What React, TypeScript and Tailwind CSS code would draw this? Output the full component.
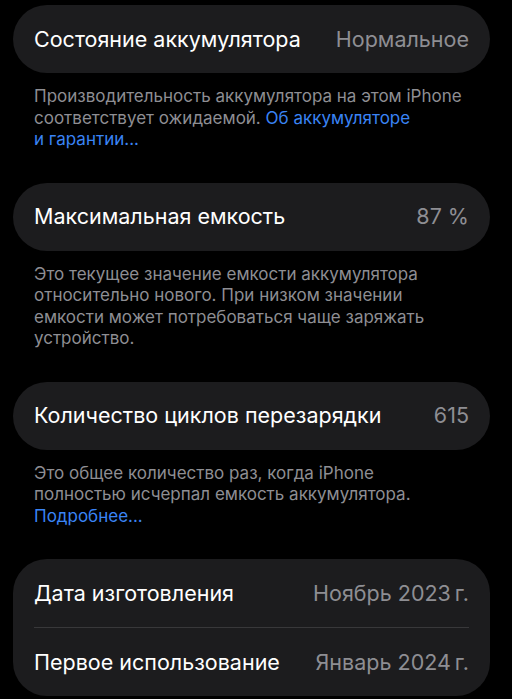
import React from "react";

const font = { fontFamily: "Inter, 'Noto Sans', sans-serif" };

function Row({ label, value }: { label: string; value: string }) {
  return (
    <div className="flex h-[68px] items-center justify-between px-[21px]">
      <span className="text-[21.5px] text-white">{label}</span>
      <span className="text-[21.5px] text-[#8e8e93]">{value}</span>
    </div>
  );
}

function Footer({ children }: { children: React.ReactNode }) {
  return (
    <p className="mb-[32px] mt-[13px] px-[21px] text-[17px] leading-[21.5px] text-[#8e8e93]">
      {children}
    </p>
  );
}

function Link({ children }: { children: React.ReactNode }) {
  return <span className="text-[#3a84f5]">{children}</span>;
}

export default function App() {
  return (
    <div className="min-h-[699px] bg-black pt-[5px]" style={font}>
      <div className="ml-[13px] w-[477px]">
        <div className="rounded-[34px] bg-[#1c1c1e]">
          <Row label="Состояние аккумулятора" value="Нормальное" />
        </div>
        <Footer>
          Производительность аккумулятора на этом iPhone
          <br />
          соответствует ожидаемой. <Link>Об аккумуляторе</Link>
          <br />
          <Link>и гарантии...</Link>
        </Footer>

        <div className="rounded-[34px] bg-[#1c1c1e]">
          <Row label="Максимальная емкость" value="87 %" />
        </div>
        <Footer>
          Это текущее значение емкости аккумулятора
          <br />
          относительно нового. При низком значении
          <br />
          емкости может потребоваться чаще заряжать
          <br />
          устройство.
        </Footer>

        <div className="rounded-[34px] bg-[#1c1c1e]">
          <Row label="Количество циклов перезарядки" value="615" />
        </div>
        <Footer>
          Это общее количество раз, когда iPhone
          <br />
          полностью исчерпал емкость аккумулятора.
          <br />
          <Link>Подробнее...</Link>
        </Footer>

        <div className="rounded-[34px] bg-[#1c1c1e]">
          <Row label="Дата изготовления" value={"Ноябрь 2023\u2009г."} />
          <div className="mx-[21px] h-px bg-[#38383a]" />
          <Row label="Первое использование" value={"Январь 2024\u2009г."} />
        </div>
      </div>
    </div>
  );
}
